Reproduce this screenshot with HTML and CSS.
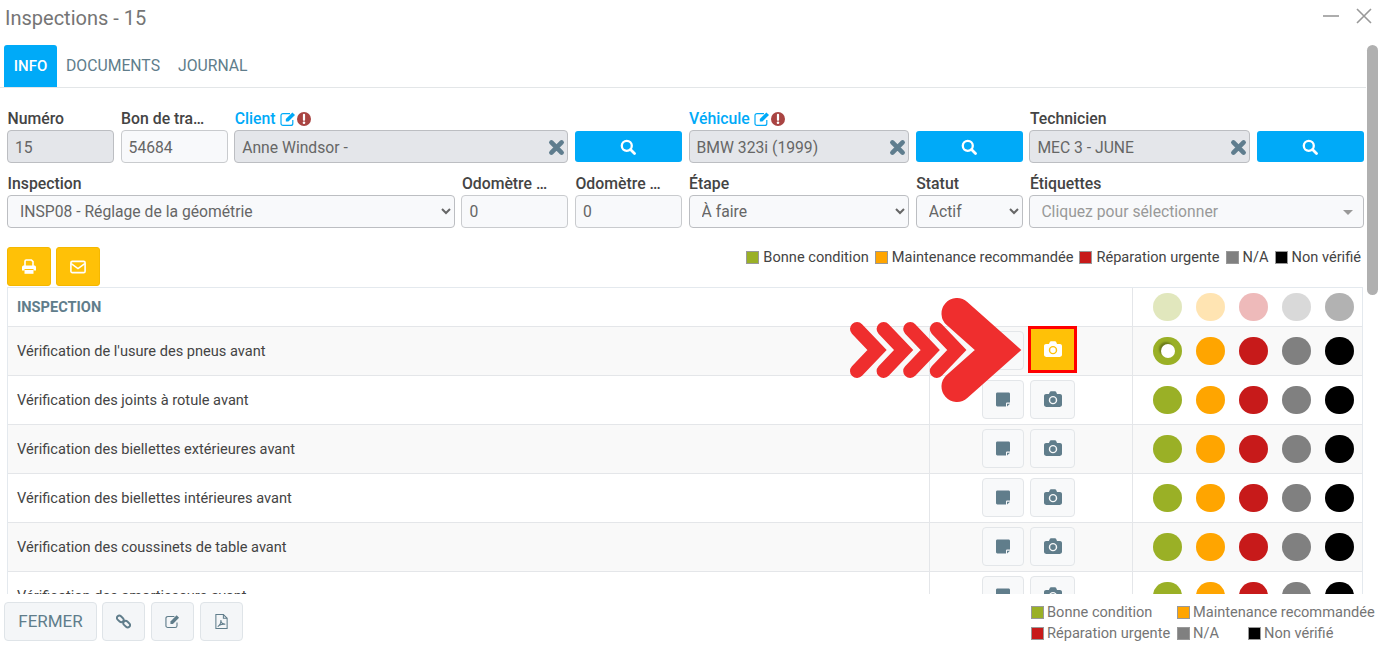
FILE: index.html
```html
<!DOCTYPE html>
<html lang="fr">
<head>
<meta charset="utf-8">
<title>Inspections - 15</title>
<link rel="stylesheet" href="styles.css">
</head>
<body>
<svg class="defs" width="0" height="0" aria-hidden="true">
  <symbol id="i-search" viewBox="0 0 16 16"><circle cx="6.8" cy="6.8" r="5" fill="none" stroke="currentColor" stroke-width="2.3"/><path d="M10.5 10.5 14.500 14.500" stroke="currentColor" stroke-width="2.8" stroke-linecap="round"/></symbol>
  <symbol id="i-x" viewBox="0 0 16 16"><path d="M3.2 3.2 12.8 12.8M12.8 3.2 3.2 12.8" stroke="currentColor" stroke-width="4.4" stroke-linecap="round"/></symbol>
  <symbol id="i-edit" viewBox="0 0 16 16"><path d="M12.8 9v3.4a2 2 0 0 1-2 2H3a2 2 0 0 1-2-2V4.600a2 2 0 0 1 2-2h7" fill="none" stroke="currentColor" stroke-width="1.2"/><path d="M5.800 8 12.400 1.400 15 4 8.400 10.600H5.800z" fill="currentColor"/></symbol>
  <symbol id="i-alert" viewBox="0 0 14 14"><circle cx="7" cy="7" r="7" fill="currentColor"/><path d="M7 2.800V7.800" stroke="#fff" stroke-width="2.2" stroke-linecap="round"/><circle cx="7" cy="10.800" r="1.300" fill="#fff"/></symbol>
  <symbol id="i-print" viewBox="0 0 16 16"><path d="M4 7V2.200C4 1.500 4.500 1 5.200 1h5.200L12 2.600V7" fill="none" stroke="currentColor" stroke-width="1.600"/><path d="M1 8.200C1 7 1.800 6.400 3 6.400h10c1.200 0 2 .6 2 1.800v3.400H12.500V10h-9v1.600H1z" fill="currentColor"/><path d="M3.500 11h9v3.800h-9z" fill="currentColor"/></symbol>
  <symbol id="i-mail" viewBox="0 0 16 14"><rect x=".9" y="1.400" width="14.200" height="11.200" rx="1.400" fill="none" stroke="currentColor" stroke-width="1.600"/><path d="M1.200 3.600 8 8.600 14.800 3.600" fill="none" stroke="currentColor" stroke-width="1.600"/></symbol>
  <symbol id="i-note" viewBox="0 0 14 14"><path d="M1.400 0h11.200C13.400 0 14 .6 14 1.400V10h-3a1 1 0 0 0-1 1v3H1.400C.6 14 0 13.400 0 12.600V1.400C0 .6.6 0 1.400 0z" fill="currentColor"/><path d="M11 11.200H14L11 14z" fill="currentColor"/></symbol>
  <symbol id="i-cam" viewBox="0 0 16 14"><path d="M1.800 2.500h2.600L5.300.6C5.500.2 5.800 0 6.200 0h3.600c.4 0 .7.200.9.6l.9 1.900h2.600c1 0 1.800.8 1.800 1.800v7.900c0 1-.8 1.800-1.800 1.800H1.800C.8 14 0 13.200 0 12.200V4.300c0-1 .8-1.800 1.800-1.800z" fill="currentColor"/><circle class="cam-ring" cx="8" cy="8" r="3.100" fill="none" stroke-width="1.300"/></symbol>
  <symbol id="i-link" viewBox="0 0 16 16"><g fill="none" stroke="currentColor" stroke-width="2"><rect x=".6" y="2.700" width="8" height="5" rx="2.500" transform="rotate(45 4.600 5.200)"/><rect x="7.400" y="8.300" width="8" height="5" rx="2.500" transform="rotate(45 11.400 10.800)"/></g></symbol>
  <symbol id="i-pdf" viewBox="0 0 14 16"><g fill="none" stroke="currentColor" stroke-width="1.100"><path d="M1 .6h8L13 4.600v10.800H1z"/><path d="M9 .6v4h4"/><path d="M3 13.500C5 12 6.500 9 6.300 6.500 6.500 9 8.500 11 11 11 9 10.500 5 11 3 13.500z"/></g></symbol>
</svg>

<div class="modal">
  <header class="head">
    <h1 class="title">Inspections - 15</h1>
    <div class="win">
      <svg class="win-min" width="16" height="16" viewBox="0 0 16 16"><path d="M0 8H16"/></svg>
      <svg class="win-close" width="16" height="16" viewBox="0 0 16 16"><path d="M1 1 15 15M15 1 1 15"/></svg>
    </div>
  </header>

  <main class="scroll">
    <nav class="tabs">
      <a class="tab active">INFO</a>
      <a class="tab">DOCUMENTS</a>
      <a class="tab">JOURNAL</a>
    </nav>

    <form class="form">
      <div class="f s1"><label class="lbl">Numéro</label><input class="inp top off" value="15" readonly></div>
      <div class="f s1"><label class="lbl">Bon de tra…</label><input class="inp top" value="54684"></div>
      <div class="f s3"><label class="lbl link">Client <svg class="ic-edit"><use href="#i-edit"/></svg> <svg class="ic-alert"><use href="#i-alert"/></svg></label>
        <div class="clear-wrap"><input class="inp top off" value="Anne Windsor -" readonly><svg class="ic-x"><use href="#i-x"/></svg></div></div>
      <button type="button" class="s1 find"><svg class="ic-search"><use href="#i-search"/></svg></button>
      <div class="f s2"><label class="lbl link">Véhicule <svg class="ic-edit"><use href="#i-edit"/></svg> <svg class="ic-alert"><use href="#i-alert"/></svg></label>
        <div class="clear-wrap"><input class="inp top off" value="BMW 323i (1999)" readonly><svg class="ic-x"><use href="#i-x"/></svg></div></div>
      <button type="button" class="s1 find"><svg class="ic-search"><use href="#i-search"/></svg></button>
      <div class="f s2"><label class="lbl">Technicien</label>
        <div class="clear-wrap"><input class="inp top off" value="MEC 3 - JUNE" readonly><svg class="ic-x"><use href="#i-x"/></svg></div></div>
      <button type="button" class="s1 find"><svg class="ic-search"><use href="#i-search"/></svg></button>

      <div class="f s4"><label class="lbl">Inspection</label><select class="inp sel"><option>INSP08 - Réglage de la géométrie</option></select></div>
      <div class="f s1"><label class="lbl">Odomètre …</label><input class="inp" value="0"></div>
      <div class="f s1"><label class="lbl">Odomètre …</label><input class="inp" value="0"></div>
      <div class="f s2"><label class="lbl">Étape</label><select class="inp sel"><option>À faire</option></select></div>
      <div class="f s1"><label class="lbl">Statut</label><select class="inp sel"><option>Actif</option></select></div>
      <div class="f s3"><label class="lbl">Étiquettes</label><div class="inp tags"><span>Cliquez pour sélectionner</span><i class="caret"></i></div></div>
    </form>

    <div class="bar">
      <div class="bar-btns">
        <button type="button" class="yel"><svg class="ic-print"><use href="#i-print"/></svg></button>
        <button type="button" class="yel"><svg class="ic-mail"><use href="#i-mail"/></svg></button>
      </div>
      <ul class="legend">
        <li><i class="sw green"></i>Bonne condition</li>
        <li><i class="sw orange"></i>Maintenance recommandée</li>
        <li><i class="sw red"></i>Réparation urgente</li>
        <li><i class="sw grey"></i>N/A</li>
        <li><i class="sw black"></i>Non vérifié</li>
      </ul>
    </div>

    <table class="tbl">
      <colgroup><col class="c1"><col class="c2"><col class="c3"></colgroup>
      <tr class="th-row">
        <th colspan="2">INSPECTION</th>
        <td class="dots-cell"><div class="dots pale"><i class="dot green"></i><i class="dot orange"></i><i class="dot red"></i><i class="dot grey"></i><i class="dot black"></i></div></td>
      </tr>
      <tr class="odd">
        <td>Vérification de l'usure des pneus avant</td>
        <td class="act"><div class="acts"><button type="button" class="mini n"><svg class="ic-note"><use href="#i-note"/></svg></button><button type="button" class="mini c hi"><svg class="ic-cam"><use href="#i-cam"/></svg></button></div></td>
        <td class="dots-cell"><div class="dots"><i class="dot green on"></i><i class="dot orange"></i><i class="dot red"></i><i class="dot grey"></i><i class="dot black"></i></div></td>
      </tr>
      <tr>
        <td>Vérification des joints à rotule avant</td>
        <td class="act"><div class="acts"><button type="button" class="mini n"><svg class="ic-note"><use href="#i-note"/></svg></button><button type="button" class="mini c"><svg class="ic-cam"><use href="#i-cam"/></svg></button></div></td>
        <td class="dots-cell"><div class="dots"><i class="dot green"></i><i class="dot orange"></i><i class="dot red"></i><i class="dot grey"></i><i class="dot black"></i></div></td>
      </tr>
      <tr class="odd">
        <td>Vérification des biellettes extérieures avant</td>
        <td class="act"><div class="acts"><button type="button" class="mini n"><svg class="ic-note"><use href="#i-note"/></svg></button><button type="button" class="mini c"><svg class="ic-cam"><use href="#i-cam"/></svg></button></div></td>
        <td class="dots-cell"><div class="dots"><i class="dot green"></i><i class="dot orange"></i><i class="dot red"></i><i class="dot grey"></i><i class="dot black"></i></div></td>
      </tr>
      <tr>
        <td>Vérification des biellettes intérieures avant</td>
        <td class="act"><div class="acts"><button type="button" class="mini n"><svg class="ic-note"><use href="#i-note"/></svg></button><button type="button" class="mini c"><svg class="ic-cam"><use href="#i-cam"/></svg></button></div></td>
        <td class="dots-cell"><div class="dots"><i class="dot green"></i><i class="dot orange"></i><i class="dot red"></i><i class="dot grey"></i><i class="dot black"></i></div></td>
      </tr>
      <tr class="odd">
        <td>Vérification des coussinets de table avant</td>
        <td class="act"><div class="acts"><button type="button" class="mini n"><svg class="ic-note"><use href="#i-note"/></svg></button><button type="button" class="mini c"><svg class="ic-cam"><use href="#i-cam"/></svg></button></div></td>
        <td class="dots-cell"><div class="dots"><i class="dot green"></i><i class="dot orange"></i><i class="dot red"></i><i class="dot grey"></i><i class="dot black"></i></div></td>
      </tr>
      <tr>
        <td>Vérification des amortisseurs avant</td>
        <td class="act"><div class="acts"><button type="button" class="mini n"><svg class="ic-note"><use href="#i-note"/></svg></button><button type="button" class="mini c"><svg class="ic-cam"><use href="#i-cam"/></svg></button></div></td>
        <td class="dots-cell"><div class="dots"><i class="dot green"></i><i class="dot orange"></i><i class="dot red"></i><i class="dot grey"></i><i class="dot black"></i></div></td>
      </tr>
    </table>
  </main>

  <footer class="foot">
    <div class="foot-btns">
      <button type="button" class="fb close">FERMER</button>
      <button type="button" class="fb"><svg class="ic-foot"><use href="#i-link"/></svg></button>
      <button type="button" class="fb"><svg class="ic-foot"><use href="#i-edit"/></svg></button>
      <button type="button" class="fb"><svg class="ic-foot"><use href="#i-pdf"/></svg></button>
    </div>
    <ul class="foot-legend">
      <li class="w146"><i class="sw green"></i>Bonne condition</li>
      <li><i class="sw orange"></i>Maintenance recommandée</li>
      <li class="w146"><i class="sw red"></i>Réparation urgente</li>
      <li class="w71"><i class="sw grey"></i>N/A</li>
      <li><i class="sw black"></i>Non vérifié</li>
    </ul>
  </footer>

  <div class="scrollbar"></div>

  <svg class="arrows" width="190" height="100" viewBox="0 0 190 100" aria-hidden="true">
    <g fill="none" stroke="#ef2e2e" stroke-width="14" stroke-linecap="round" stroke-linejoin="miter">
      <path d="M8 29 28 50 8 71"/>
      <path d="M34.600 29 54.600 50 34.600 71"/>
      <path d="M61.200 29 81.200 50 61.200 71"/>
      <path d="M87.800 29 107.800 50 87.800 71"/>
    </g>
    <path d="M108 13.500 149 50 108 86.500" fill="none" stroke="#ef2e2e" stroke-width="31" stroke-linecap="round" stroke-linejoin="miter"/>
  </svg>
</div>
</body>
</html>
```

FILE: styles.css
```css
* { box-sizing: border-box; }
html, body { margin: 0; height: 100%; background: #fff; overflow: hidden; }
body { font-family: Roboto, "Liberation Sans", sans-serif; font-size: 14.6px; color: #444; }
.defs { position: absolute; }
i { display: block; }
ul { list-style: none; margin: 0; padding: 0; }

.modal { position: relative; width: 1380px; height: 646px; display: flex; flex-direction: column; overflow: hidden; }

.head { height: 45px; flex: none; display: flex; justify-content: space-between; padding: 0 8px 0 5px; }
.title { margin: 6px 0 0; font-size: 20px; font-weight: 400; line-height: 24px; color: #757575; }
.win { display: flex; gap: 17px; padding-top: 8px; }
.win svg { display: block; fill: none; stroke: #999; stroke-width: 1.6; }

.scroll { flex: 1; min-height: 0; overflow: hidden; }

.tabs { display: flex; height: 43px; width: 1366px; margin-bottom: 22px; border-bottom: 1px solid #e3e6e8; padding-left: 4px; }
.tab { height: 42px; line-height: 42px; padding: 0 9px; font-size: 15.75px; color: #607d8b; }
.tab.active { width: 53px; padding: 0; text-align: center; background: #00aaf8; color: #fff; font-weight: 500; font-size: 15px; border-radius: 3px 3px 0 0; }

.form { margin-left: 7px; width: 1356.6px; display: grid; grid-template-columns: repeat(12, 1fr); column-gap: 6.6px; row-gap: 12px; }
.s1 { grid-column: span 1; }
.s2 { grid-column: span 2; }
.s3 { grid-column: span 3; }
.s4 { grid-column: span 4; }
.f { min-width: 0; }
.lbl { display: flex; align-items: center; height: 17px; margin: 0 .5px 3px; line-height: 17px; font-size: 15.8px; font-weight: 500; color: #444; white-space: pre; }
.lbl.link { color: #00aaf8; }
.ic-edit { width: 16px; height: 16px; }
.ic-alert { width: 14px; height: 14px; color: #a94442; margin-left: 1px; }
.inp { display: block; width: 100%; height: 33px; padding: 0 7px; border: 1px solid #c9cbce; border-radius: 4px; background: #f8f9fb; font: inherit; font-size: 15.7px; color: #666; }
.inp.top { padding-top: 2px; }
.inp.off { background: #e4e6ea; border-color: #bcbec2; }
.sel { padding-left: 8px; border-color: #bcbec2; }
.clear-wrap { position: relative; }
.ic-x { position: absolute; right: 3px; top: 9px; width: 17px; height: 17px; color: #5f7d8e; }
.find { align-self: end; height: 31px; margin-bottom: 1px; border: 0; border-radius: 3px; background: #00aaf8; color: #fff; display: flex; align-items: center; justify-content: center; padding: 0; }
.ic-search { width: 16px; height: 16px; }
.tags { display: flex; align-items: center; justify-content: space-between; padding: 0 10px 0 11px; border-color: #bcbec2; color: #999; }
.caret { width: 0; height: 0; border-left: 5px solid transparent; border-right: 5px solid transparent; border-top: 5px solid #999; margin-top: 1px; }

.bar { display: flex; justify-content: space-between; align-items: flex-start; height: 40px; margin: 19px 17px 0 7px; }
.bar-btns { display: flex; gap: 5px; }
.yel { width: 44px; height: 39px; border: 1px solid #f5b800; border-radius: 3px; background: #ffc107; color: #fff; display: flex; align-items: center; justify-content: center; padding: 0; }
.ic-print { width: 16px; height: 16px; }
.ic-mail { width: 16px; height: 14px; }
.legend { display: flex; gap: 6px; margin: 2px 2px 0 0; line-height: 17px; color: #444; }
.legend li, .foot-legend li { display: flex; align-items: center; white-space: nowrap; }
.sw { width: 13px; height: 13px; margin-right: 4px; border: 1px solid #999; }
.foot-legend .sw { margin-right: 3px; }
.sw.green, .dot.green { background: #9ab026; }
.sw.orange, .dot.orange { background: #ffa500; }
.sw.red, .dot.red { background: #c71a1a; }
.sw.grey, .dot.grey { background: #808080; }
.sw.black, .dot.black { background: #000; }

.tbl { width: 1356px; margin-left: 7px; table-layout: fixed; border-collapse: separate; border-spacing: 0; border-top: 1px solid #e4e9ee; border-left: 1px solid #e4e9ee; border-right: 1px solid #e4e9ee; }
.c1 { width: 921px; }
.c2 { width: 203px; }
.tbl th, .tbl td { padding: 0; border-bottom: 1px solid #e4e6e9; height: 49px; }
.tbl td:first-child, .tbl th { padding-left: 9px; text-align: left; color: #444; }
.th-row th, .th-row td { height: 39px; }
.tbl th { font-weight: 700; color: #607d8b; }
.odd td { background: #f9f9f9; }
.act, .dots-cell { border-left: 1px solid #e4e6e9; }
.acts { display: flex; justify-content: flex-end; gap: 6px; padding-right: 57px; margin-top: -2px; }
.mini { height: 39px; padding: 0; border: 1px solid #e3e6e9; border-radius: 4px; background: #f8f9fa; color: #607d8b; display: flex; align-items: center; justify-content: center; }
.mini.n { width: 42px; }
.mini.c { width: 45px; }
.ic-note { width: 14px; height: 15px; }
.ic-cam { width: 18px; height: 16px; --ring: #f8f9fa; }
.cam-ring { stroke: var(--ring); }
.mini.hi { width: 49px; height: 47px; margin: -5px -2px -3px -2px; border: 3px solid #f00; border-radius: 0; background: #ffc107; color: #fff; }
.hi .ic-cam { --ring: #ffc107; }
.dots { display: flex; gap: 14.5px; padding-left: 20px; }
.dot { width: 28.5px; height: 28.5px; border-radius: 50%; }
.pale .dot { opacity: .3; }
.dot.on { position: relative; }
.dot.on::after { content: ""; position: absolute; left: 7.5px; top: 7.5px; width: 14px; height: 14px; border-radius: 50%; background: #fff; box-shadow: -2px -2px 2px rgba(0,0,0,.3); }

.foot { height: 52px; flex: none; display: flex; justify-content: space-between; background: #fff; }
.foot-btns { display: flex; gap: 6px; padding: 8px 0 0 4px; }
.fb { width: 43px; height: 39px; padding: 0; border: 1px solid #dfe4e8; border-radius: 4px; background: #f4f6f8; color: #607d8b; display: flex; align-items: center; justify-content: center; font: inherit; }
.fb.close { width: 93px; margin-right: -1px; padding-bottom: 2px; font-size: 17px; }
.ic-foot { width: 15px; height: 15px; }
.foot-legend { width: 349px; display: flex; flex-wrap: wrap; align-content: flex-start; row-gap: 4px; padding-top: 10px; line-height: 17px; color: #757575; }
.w146 { width: 146px; }
.w71 { width: 71px; }

.scrollbar { position: absolute; left: 1367px; top: 45px; width: 11px; height: 250px; border-radius: 6px; background: #b0b0b0; }
.arrows { position: absolute; left: 849px; top: 300px; overflow: visible; pointer-events: none; }
```
